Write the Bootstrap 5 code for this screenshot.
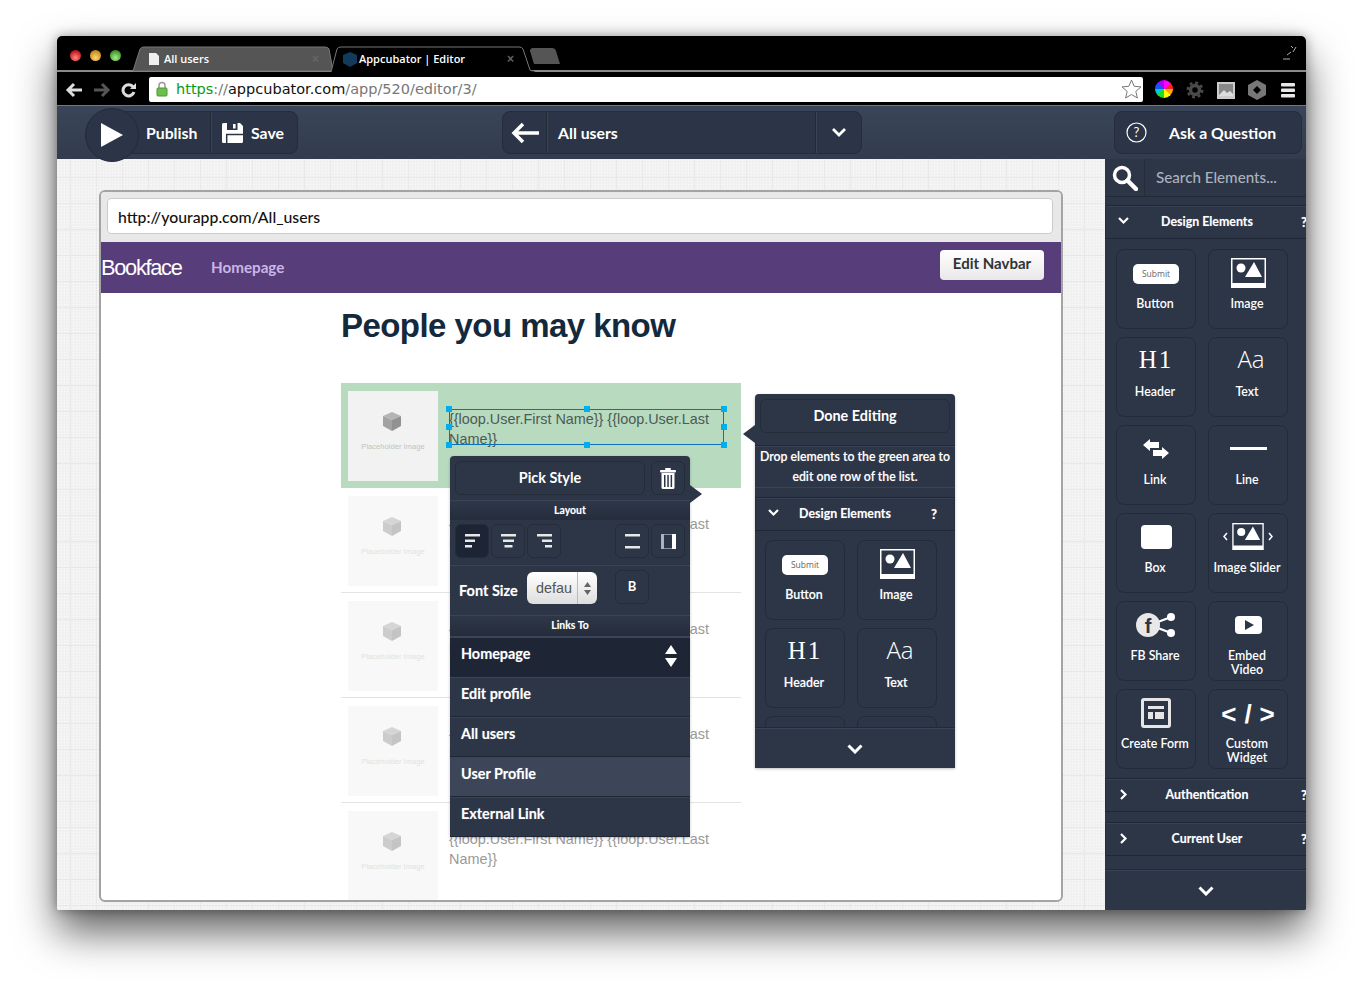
<!DOCTYPE html>
<html lang="en">
<head>
    <meta charset="UTF-8">
    <meta name="viewport" content="width=device-width, initial-scale=1.0">
    <title>Appcubator | Editor</title>

    <link href="https://cdn.jsdelivr.net/npm/bootstrap@5.3.0/dist/css/bootstrap.min.css" rel="stylesheet">
    <style>
        html, body { height: 989px; overflow: hidden; background: #fff; }
        body { padding: 36px 57px 0; font-family: Lato, "Liberation Sans", sans-serif; }

        .win { width: 1249px; height: 874px; border-radius: 5px 5px 2px 2px; overflow: hidden; box-shadow: 0 22px 42px rgba(0,0,0,.62), 0 0 12px rgba(0,0,0,.35); }

        /* browser chrome */
        .tabbar { height: 36px; background: #000; border-bottom: 2px solid #8a8a8a; position: relative; }
        .light { width: 11px; height: 11px; border-radius: 50%; position: absolute; top: 14px; }
        .light-r { left: 13px; background: radial-gradient(circle at 50% 70%, #ff8a80, #c8141c 70%); }
        .light-y { left: 33px; background: radial-gradient(circle at 50% 70%, #ffd77a, #c88a14 70%); }
        .light-g { left: 53px; background: radial-gradient(circle at 50% 70%, #a8ec8a, #3a9a28 70%); }
        .tabshape { position: absolute; left: 0; top: 0; }
        .tabtext { position: absolute; top: 15px; font: 600 11px "Open Sans", sans-serif; color: #fff; line-height: 16px; }
        .tabx { position: absolute; top: 15px; color: #666; font: 700 12px "Liberation Sans", sans-serif; line-height: 16px; }
        .winresize { position: absolute; right: 9px; top: 9px; }

        .urlrow { height: 34px; background: #000; border-bottom: 1px solid #777; padding-left: 8px; }
        .urlbox { width: 994px; height: 25px; background: #fff; border-radius: 2px; margin: 1px 12px 0 8px; padding: 0 1px 0 7px; font: 14.5px/25px "DejaVu Sans", sans-serif; color: #777; }
        .u-green { color: #0a9a14; }
        .u-black { color: #111; }
        .navico { width: 28px; }
        .extico { width: 31px; }
        .wheel { width: 18px; height: 18px; border-radius: 50%; background: conic-gradient(#f0f 0 45deg, #f22 45deg 90deg, #fa0 90deg 135deg, #ff0 135deg 180deg, #2d2 180deg 225deg, #0cc 225deg 270deg, #15f 270deg 315deg, #a0f 315deg); }

        /* editor toolbar */
        .apptop { height: 53px; background: linear-gradient(#394558, #323c4e); position: relative; z-index: 5; color: #fff; font-size: 15.8px; font-weight: 700; }
        .tgroup { height: 43px; background: #2b3547; border: 1px solid #252d3b; border-radius: 8px; position: absolute; top: 5px; }
        .tcell { height: 100%; border-right: 1px solid #222a38; box-shadow: 1px 0 0 #3a4456; }
        .tcell:last-child { border-right: 0; box-shadow: none; }
        .playdisc { position: absolute; left: 28px; top: 2px; width: 54px; height: 54px; border-radius: 50%; background: #2b3547; border: 1px solid #222a38; }

        /* main area */
        .workarea { height: 751px; position: relative; }
        .canvasbg { flex: 1; position: relative; background-color: #f1f1f1;
            background-image: linear-gradient(#e8e8e8 1px, transparent 1px), linear-gradient(90deg, #e9e9e9 1px, transparent 1px), radial-gradient(#fbfbfb .8px, transparent 1px);
            background-size: 26px 26px, 26px 26px, 3px 3px; background-position: 0 -8px, 13px 0, 0 0; }

        .frame { position: absolute; left: 42px; top: 31px; width: 964px; height: 712px; border: 2px solid #a4a4a4; border-radius: 6px; background: #fff; overflow: hidden; }
        .frametop { height: 50px; padding: 6px 8px 8px 6px; background: #e8e8e8; }
        .addr { height: 36px; background: #fff; border: 1px solid #ccc; border-radius: 4px; padding-left: 10px; font-size: 15.8px; font-weight: 500; line-height: 35px; color: #111; }
        .purple { height: 51px; background: #573e7b; padding-right: 17px; }
        .brand { color: #fff; font: 21.8px "Liberation Sans", sans-serif; letter-spacing: -1.3px; width: 110px; }
        .plink { color: #c9b6e4; font-size: 15.2px; font-weight: 700; }
        .editnav { width: 104px; height: 30px; margin-top: -6px; background: linear-gradient(#fff, #e8e8e8); color: #333; font-size: 15px; font-weight: 700; line-height: 1; padding: 0 0 2px; border-radius: 4px; border: 0; }
        .editnav:hover { background: #eee; color: #333; }

        .pagebody { margin-left: 240px; width: 400px; }
        .pagehead { height: 90px; margin: 0; padding-top: 13px; font: 700 33px/40px "Liberation Sans", sans-serif; letter-spacing: -.55px; color: #14293b; }
        .urow { height: 105px; padding: 8px 0 0 7px; border-bottom: 1px solid #e3e3e3; }
        .urow:first-child { background: #b8dbc0; border: 0; }
        .thumb { width: 90px; height: 90px; padding-top: 21px; background: #f8f8f8; flex: none; color: #e2e2e2; font: 7.6px/10px "Liberation Sans", sans-serif; }
        .urow:first-child .thumb { background: #f2f2f2; color: #c2c2c2; }
        .thumb svg { margin: 0 3px 11px 0; opacity: .5; }
        .urow:first-child .thumb svg { opacity: 1; }
        .rowtext { margin: 18px 0 0 11px; width: 275px; font: 14.4px/20px "Liberation Sans", sans-serif; color: #999; position: relative; height: 36px; }
        .urow:first-child .rowtext { color: #4b5a55; }
        .selbox { position: absolute; inset: 0; border: 1px solid #0a72b8; }
        .hnd { position: absolute; width: 6px; height: 6px; background: #00aeef; }

        /* popovers */
        .pop { position: absolute; background: #2d3647; color: #fff; font-weight: 700; box-shadow: 0 1px 3px rgba(0,0,0,.25); text-shadow: 0 0 1px rgba(255,255,255,.35); }
        .pop-style { left: 393px; top: 297px; width: 240px; height: 381px; border-radius: 4px 4px 0 0; }
        .pop-done { left: 698px; top: 235px; width: 200px; height: 374px; border-radius: 4px 4px 0 0; }
        .poparrow { position: absolute; width: 0; height: 0; border: 9px solid transparent; }
        .darkbtn { background: transparent; border: 1px solid #242c3a; border-radius: 6px; color: #fff; font-weight: 700; font-size: 14.4px; padding: 0; height: 34px; }
        .sbtn { width: 34px; flex: none; padding: 0; }
        .sbtn-on { background: #1d2535; }
        .layhead { height: 20px; background: linear-gradient(#2e3748, #252d3c); border-top: 1px solid #3a4456; font-size: 10.5px; line-height: 19px; text-align: center; }
        .fsz { font-size: 14.5px; line-height: 42px; }
        .sizesel { width: 70px; height: 32px; margin-top: 2px; background: linear-gradient(#fff, #dedede); border-radius: 6px; color: #555; font: 14.4px/32px "Liberation Sans", sans-serif; padding-left: 9px; text-shadow: none; }
        .sizesel i { margin-left: auto; width: 20px; height: 32px; border-left: 1px solid #bbb; }
        .plist .list-group-item { height: 40px; background: #2d3647; color: #fff; border: 0; border-bottom: 1px solid #1f2635; border-top: 1px solid #3a4456; border-radius: 0; padding: 6px 13px 5px 11px; font-size: 14.4px; line-height: 20px; font-weight: 700; }
        .plist .li-on { background: #1e2636; }
        .plist .li-hover { background: #3c4658; }

        .drophint { font-size: 12.3px; line-height: 20px; text-align: center; font-weight: 600; height: 40px; white-space: nowrap; }
        .rule { height: 2px; background: #3a4456; border-top: 1px solid #222a38; }
        .sechead { height: 34px; border: 1px solid #262e3d; border-bottom-color: #1f2635; border-top-color: #1f2635; box-shadow: inset 0 1px 0 #384254; font-size: 12.4px; position: relative; text-align: center; line-height: 32px; text-shadow: 0 0 1px rgba(255,255,255,.35); }
        .sechead svg { position: absolute; top: 11px; left: 12px; }
        .sechead .chev-r { top: 10px; left: 14px; }
        .qm { position: absolute; font-weight: 900; font-size: 13px; top: 0; }

        .tilegrid { display: grid; grid-template-columns: 80px 80px; gap: 8px 12px; }
        .tile { height: 80px; border: 1px solid #232b39; border-radius: 8px; text-align: center; font-size: 12.4px; line-height: 14px; font-weight: 600; }
        .tileico { height: 47px; }
        .tileico svg { margin-bottom: 2px; }
        .tilelabel { padding-right: 2px; }
        .submitchip { width: 46px; height: 20px; background: #fff; border-radius: 5px; color: #666; font: 8.5px/20px "Open Sans", sans-serif; text-shadow: none; }
        .h1glyph { font: 25px/1 "Liberation Serif", serif; letter-spacing: 2px; margin-bottom: 4px; color: #fff; text-shadow: none; }
        .aaglyph { font: 300 24px/1 "Open Sans", sans-serif; color: #fff; padding-left: 6px; margin-bottom: 5px; text-shadow: none; }
        .codeglyph { font: 700 26px/1 "Liberation Sans", sans-serif; letter-spacing: 8px; padding-left: 8px; white-space: pre; }

        .sidepane { width: 201px; background: #2d3647; position: relative; overflow: hidden; color: #fff; font-weight: 700; }
        .searchrow { height: 38px; border-bottom: 1px solid #222a38; }
        .searchicon { width: 40px; height: 37px; border-right: 1px solid #252d3b; }
        .searchtext { margin-left: 11px; font-size: 15.2px; font-weight: 500; color: #abb2bd; }
        .morebar { position: absolute; left: 0; right: 0; bottom: 0; height: 40px; background: #2d3647; border-top: 1px solid #3a4456; box-shadow: 0 -1px 0 #222a38; }
    </style>
</head>
<body>

<div class="win d-flex flex-column">

    <!-- Tab strip -->
    <div class="tabbar flex-none">
        <svg class="tabshape" width="520" height="36">
            <path d="M76 35 L83 13 Q84 11 87 11 L268 11 Q271 11 272 13 L276 35Z" fill="#555" stroke="#777"/>
            <path d="M274 36 L280 13 Q281 11 284 11 L462 11 Q465 11 466 13 L473 34 Q474 35 478 35 L478 38 L270 38Z" fill="#000" stroke="#777"/>
            <path d="M473 15 Q473 12 476 12 L495 12 Q498 12 499 15 L503 28 L477 28Z" fill="#555"/>
            <path d="M92 17h7l3 3v9H92z" fill="#eee"/>
            <path d="M286 19 l7 -3 l7 3 v8 l-7 4 l-7 -4z" fill="#123a5c"/>
        </svg>
        <span class="light light-r"></span><span class="light light-y"></span><span class="light light-g"></span>
        <span class="tabtext" style="left:107px">All users</span>
        <span class="tabx" style="left:255px">×</span>
        <span class="tabtext" style="left:302px">Appcubator | Editor</span>
        <span class="tabx" style="left:450px">×</span>
        <svg class="winresize" width="14" height="15" fill="none" stroke="#ddd" stroke-width=".8">
            <path d="M8 1l2 2M13 2l-3 5M0 14h7M4 10l4-3"/>
        </svg>
    </div>

    <!-- URL row -->
    <div class="urlrow d-flex align-items-center flex-none">
        <span class="navico"><svg width="18" height="16" fill="none" stroke="#ddd" stroke-width="3"><path d="M17 8H3M9 2L3 8l6 6"/></svg></span>
        <span class="navico"><svg width="18" height="16" fill="none" stroke="#555" stroke-width="3"><path d="M1 8h14M9 2l6 6-6 6"/></svg></span>
        <span class="navico" style="width:20px"><svg width="16" height="16" fill="none" stroke="#ddd" stroke-width="3"><path d="M13 10a5.6 5.6 0 1 1-.8-5"/><path d="M15 1v6H9z" fill="#ddd" stroke="none"/></svg></span>
        <div class="urlbox d-flex align-items-center">
            <svg class="me-2" width="12" height="16"><path d="M3 7V4.500a3 3 0 0 1 6 0V7" fill="none" stroke="#999" stroke-width="1.500"/><rect x="1" y="7" width="10" height="8" rx="1" fill="#6cc04a" stroke="#4a9a2c"/></svg>
            <span><span class="u-green">https</span>://<span class="u-black">appcubator.com</span>/app/520/editor/3/</span>
            <svg class="ms-auto" width="21" height="20" fill="#fff" stroke="#777"><path d="M10.500 1l2.700 6.300 6.800.6-5.200 4.500 1.600 6.600-5.900-3.500-5.900 3.500 1.600-6.600L1 7.900l6.800-.6z"/></svg>
        </div>
        <span class="extico"><span class="wheel d-block"></span></span>
        <span class="extico"><svg width="18" height="18" fill="none" stroke="#4a4a4a"><circle cx="9" cy="9" r="4.500" stroke-width="3.500"/><circle cx="9" cy="9" r="7.300" stroke-width="2.400" stroke-dasharray="2.900 2.830"/></svg></span>
        <span class="extico"><svg width="18" height="17"><rect width="18" height="17" fill="#ccc"/><rect x="2" y="2" width="14" height="12" fill="#888"/><path d="M2 13l5-5 3 3 3-2 3 3v2H2z" fill="#ddd"/></svg></span>
        <span class="extico" style="width:33px"><svg width="18" height="20"><path d="M9 0l9 5v10l-9 5-9-5V5z" fill="#777"/><path d="M9 6l4 4-4 4-4-4z" fill="#000"/></svg></span>
        <span><svg width="14" height="15" fill="#e8e8e8"><rect width="14" height="3.500" rx="1"/><rect y="5.500" width="14" height="3.500" rx="1"/><rect y="11" width="14" height="3.500" rx="1"/></svg></span>
    </div>

    <!-- Editor toolbar -->
    <div class="apptop flex-none">
        <div class="tgroup d-flex align-items-center" style="left:60px;width:181px">
            <div class="tcell d-flex align-items-center" style="width:93px;padding-left:28px">Publish</div>
            <div class="tcell d-flex align-items-center" style="padding-left:11px">
                <svg class="me-2" width="21" height="20" viewBox="0 0 21 20"><path d="M1.500 0H18l3 3v15.500a1.500 1.500 0 0 1-1.500 1.500h-18A1.500 1.500 0 0 1 0 18.500v-17A1.500 1.500 0 0 1 1.500 0z" fill="#fff"/><rect x="5" y="0" width="10.500" height="7" fill="#2b3547"/><rect x="11" y="1" width="2.600" height="4.500" fill="#fff"/><path d="M4.700 20v-8.500H21" fill="none" stroke="#2b3547" stroke-width="1.500"/></svg>
                Save
            </div>
        </div>
        <div class="playdisc d-flex align-items-center justify-content-center">
            <svg width="22" height="24"><path d="M0 0l22 12L0 24z" fill="#fff"/></svg>
        </div>
        <div class="tgroup d-flex align-items-center" style="left:445px;width:360px">
            <div class="tcell d-flex align-items-center justify-content-center flex-none" style="width:44px">
                <svg width="28" height="22" fill="none" stroke="#fff" stroke-width="3.500"><path d="M28 11H4M12 2l-9 9 9 9"/></svg>
            </div>
            <div class="tcell d-flex align-items-center flex-grow-1" style="padding-left:11px">All users</div>
            <div class="tcell d-flex align-items-center justify-content-center flex-none" style="width:45px;padding-left:1px">
                <svg width="14" height="9" fill="none" stroke="#fff" stroke-width="2.800"><path d="M1 1l6 6 6-6"/></svg>
            </div>
        </div>
        <div class="tgroup d-flex align-items-center" style="left:1057px;width:188px;padding-left:11px">
            <svg width="21" height="21" fill="none" stroke="#fff" stroke-width="1.200"><circle cx="10.500" cy="10.500" r="9.500"/><text x="10.500" y="15" text-anchor="middle" font-size="13" font-weight="400" fill="#fff" stroke="none" font-family="Lato, sans-serif">?</text></svg>
            <span style="margin-left:22px">Ask a Question</span>
        </div>
    </div>

    <div class="workarea d-flex">
        <div class="canvasbg">
            <div class="frame">
                <div class="frametop"><div class="addr">http://yourapp.com/All_users</div></div>
                <div class="purple d-flex align-items-center">
                    <span class="brand">Bookface</span>
                    <span class="plink">Homepage</span>
                    <button type="button" class="btn editnav ms-auto">Edit Navbar</button>
                </div>
                <div class="pagebody">
                    <h1 class="pagehead">People you may know</h1>
                    <div id="rows"></div>
                </div>
            </div>

            <!-- Pick style popover -->
            <div class="pop pop-style">
                <span class="poparrow" style="left:240px;top:29px;border-left-color:#2d3647;border-width:9px 0 9px 12px"></span>
                <div class="d-flex" style="gap:6px;padding:5px 5px 5px">
                    <button type="button" class="btn darkbtn flex-grow-1">Pick Style</button>
                    <button type="button" class="btn darkbtn sbtn d-flex align-items-center justify-content-center">
                        <svg width="16" height="21" fill="#fff"><rect x="5" y="0" width="6" height="2" rx="1"/><rect x="0" y="2" width="16" height="2.500" rx="1"/><path d="M1.500 5h13v14.500a1.500 1.500 0 0 1-1.500 1.500H3a1.500 1.500 0 0 1-1.500-1.500z"/><g fill="#2d3647"><rect x="4" y="7" width="1.500" height="12"/><rect x="7.300" y="7" width="1.500" height="12"/><rect x="10.600" y="7" width="1.500" height="12"/></g></svg>
                    </button>
                </div>
                <div class="layhead">Layout</div>
                <div class="d-flex" style="padding:4px 5px 7px;gap:2px;border-bottom:1px solid #3a4456">
                    <button type="button" class="btn darkbtn sbtn sbtn-on d-flex align-items-center justify-content-center"><svg width="15" height="14" fill="#e8e8e8"><rect y="0" width="15" height="2.500"/><rect y="5.500" width="10" height="2.500"/><rect y="11" width="7" height="2.500"/></svg></button>
                    <button type="button" class="btn darkbtn sbtn d-flex align-items-center justify-content-center"><svg width="15" height="14" fill="#e8e8e8"><rect y="0" width="15" height="2.500"/><rect x="2" y="5.500" width="11" height="2.500"/><rect x="3.500" y="11" width="8" height="2.500"/></svg></button>
                    <button type="button" class="btn darkbtn sbtn d-flex align-items-center justify-content-center"><svg width="15" height="14" fill="#e8e8e8"><rect y="0" width="15" height="2.500"/><rect x="5" y="5.500" width="10" height="2.500"/><rect x="8" y="11" width="7" height="2.500"/></svg></button>
                    <button type="button" class="btn darkbtn sbtn d-flex align-items-center justify-content-center ms-auto"><svg width="15" height="15" fill="#e8e8e8"><rect y="0" width="15" height="2.500"/><rect y="12" width="15" height="2.500"/></svg></button>
                    <button type="button" class="btn darkbtn sbtn d-flex align-items-center justify-content-center" style="margin-left:0"><svg width="15" height="15"><rect x=".5" y=".5" width="14" height="14" fill="none" stroke="#8c93a0"/><rect x="0" y="0" width="3" height="15" fill="#aeb2ba"/><rect x="11" y="0" width="4" height="15" fill="#fff"/></svg></button>
                </div>
                <div class="d-flex align-items-start" style="height:49px;padding:4px 0 0 9px">
                    <span class="fsz" style="width:68px">Font Size</span>
                    <span class="sizesel d-flex">defau<i class="d-flex align-items-center justify-content-center"><svg width="7" height="13" fill="#666"><path d="M3.500 0L7 5H0zM3.500 13L0 8h7z"/></svg></i></span>
                    <button type="button" class="btn darkbtn sbtn" style="margin-left:18px;font-size:13px">B</button>
                </div>
                <div class="layhead" style="border-bottom:1px solid #3a4456;height:22px">Links To</div>
                <ul class="list-group plist">
                    <li class="list-group-item li-on d-flex justify-content-between align-items-start">Homepage<svg width="12" height="22" fill="#fff" style="margin-top:1px"><path d="M6 0l6 9H0zM6 22L0 13h12z"/></svg></li>
                    <li class="list-group-item">Edit profile</li>
                    <li class="list-group-item">All users</li>
                    <li class="list-group-item li-hover">User Profile</li>
                    <li class="list-group-item">External Link</li>
                </ul>
            </div>

            <!-- Done editing popover -->
            <div class="pop pop-done overflow-visible">
                <span class="poparrow" style="left:-12px;top:31px;border-right-color:#2d3647;border-width:9px 12px 9px 0"></span>
                <div style="padding:5px 5px 12px">
                    <button type="button" class="btn darkbtn w-100">Done Editing</button>
                </div>
                <div class="rule"></div>
                <div class="drophint">Drop elements to the green area to<br>edit one row of the list.</div>
                <div style="height:10px;border-top:1px solid #3a4456;"></div>
                <div class="sechead"><svg width="11" height="8" fill="none" stroke="#fff" stroke-width="2.200"><path d="M1 1l4.500 4.500L10 1"/></svg><span class="d-block" style="margin-right:20px">Design Elements</span><span class="qm" style="right:17px">?</span></div>
                <div class="tilegrid" id="popTiles" style="padding:9px 0 0 10px;height:198px;overflow:hidden"></div>
                <div class="morebar d-flex align-items-center justify-content-center"><svg width="16" height="10" fill="none" stroke="#fff" stroke-width="3"><path d="M1.500 1.500l6.500 6.500 6.500-6.500"/></svg></div>
            </div>
        </div>

        <!-- Right side panel -->
        <div class="sidepane">
            <div class="searchrow d-flex align-items-center">
                <div class="searchicon d-flex align-items-center justify-content-center">
                    <svg width="26" height="26" fill="none" stroke="#fff"><circle cx="10" cy="10" r="7.500" stroke-width="3.500"/><path d="M15.500 15.500L24 24" stroke-width="4.500" stroke-linecap="round"/></svg>
                </div>
                <span class="searchtext">Search Elements...</span>
            </div>
            <div style="height:8px"></div>
            <div class="sechead" style="width:212px"><svg width="11" height="8" fill="none" stroke="#fff" stroke-width="2.200"><path d="M1 1l4.500 4.500L10 1"/></svg><span class="d-block" style="margin-right:8px">Design Elements</span><span class="qm" style="right:9px">?</span></div>
            <div class="tilegrid" id="sideTiles" style="padding:10px 0 0 11px"></div>
            <div style="height:9px"></div>
            <div class="sechead" style="width:212px"><svg class="chev-r" width="8" height="11" fill="none" stroke="#fff" stroke-width="2.200"><path d="M1 1l4.500 4.500L1 10"/></svg><span class="d-block" style="margin-right:8px">Authentication</span><span class="qm" style="right:9px">?</span></div>
            <div style="height:10px"></div>
            <div class="sechead" style="width:212px"><svg class="chev-r" width="8" height="11" fill="none" stroke="#fff" stroke-width="2.200"><path d="M1 1l4.500 4.500L1 10"/></svg><span class="d-block" style="margin-right:8px">Current User</span><span class="qm" style="right:9px">?</span></div>
            <div class="morebar d-flex align-items-center justify-content-center"><svg width="16" height="10" fill="none" stroke="#fff" stroke-width="3"><path d="M1.500 1.500l6.500 6.500 6.500-6.500"/></svg></div>
        </div>
    </div>
</div>

<script src="https://cdn.jsdelivr.net/npm/bootstrap@5.3.0/dist/js/bootstrap.bundle.min.js"></script>
<script>
    const rowText = '{{loop.User.First Name}} {{loop.User.Last Name}}';
    const cube = '<svg width="18" height="19" viewBox="0 0 18 19"><path d="M9 0l9 4-9 4-9-4z" fill="#b4b4b4"/><path d="M0 4l9 4v11l-9-5z" fill="#a2a2a2"/><path d="M18 4L9 8v11l9-5z" fill="#929292"/></svg>';

    let rowsHtml = '';
    for (let i = 0; i < 5; i++) {
        let handles = '';
        if (i === 0) {
            handles = '<span class="selbox"></span>';
            [[-3,-3],[135,-3],[272,-3],[-3,15],[272,15],[-3,33],[135,33],[272,33]].forEach(p => {
                handles += `<span class="hnd" style="left:${p[0]}px;top:${p[1]}px"></span>`;
            });
        }
        rowsHtml += `<div class="urow d-flex">
            <div class="thumb d-flex flex-column align-items-center">${cube}Placeholder Image</div>
            <div class="rowtext">${rowText}${handles}</div>
        </div>`;
    }
    document.getElementById('rows').innerHTML = rowsHtml;

    const imgIcon = (w, h) => `<svg width="${w}" height="${h}" viewBox="0 0 35 30"><rect width="35" height="30" fill="#fff"/><rect x="1.500" y="1.500" width="32" height="23.500" fill="#2d3647"/><circle cx="10" cy="10" r="4.500" fill="#fff"/><path d="M23 4l8 15H14z" fill="#fff"/></svg>`;
    const tiles = [
        ['Button', '<span class="submitchip d-block">Submit</span>'],
        ['Image', imgIcon(35, 30)],
        ['Header', '<span class="h1glyph">H1</span>'],
        ['Text', '<span class="aaglyph">Aa</span>'],
        ['Link', '<svg width="26" height="20" fill="#fff"><path d="M0 6l7-6v3h9v6H7v3zM26 14l-7 6v-3h-9v-6h9V8z"/></svg>'],
        ['Line', '<svg width="37" height="3"><rect width="37" height="3" fill="#fff"/></svg>'],
        ['Box', '<svg width="31" height="24"><rect width="31" height="24" rx="4" fill="#fff"/></svg>'],
        ['Image Slider', '<svg width="50" height="27" viewBox="0 0 50 27" fill="none" stroke="#fff" stroke-width="1.500"><path d="M4 10l-3 3.500 3 3.500M46 10l3 3.500-3 3.500"/><svg x="9" width="32" height="27" viewBox="0 0 35 30" stroke="none">' + imgIcon(35, 30).replace(/<svg[^>]*>|<\/svg>/g, '') + '</svg></svg>'],
        ['FB Share', '<svg width="40" height="26" viewBox="0 0 40 26"><path d="M14 13L35 5M14 13l21 8" stroke="#fff" stroke-width="2.200"/><circle cx="12" cy="13" r="12" fill="#e8e8e8"/><circle cx="35" cy="5" r="4" fill="#fff"/><circle cx="35" cy="21" r="4" fill="#fff"/><text x="12" y="21" text-anchor="middle" font-size="20" font-weight="700" fill="#2d3647" font-family="Liberation Sans, sans-serif">f</text></svg>'],
        ['Embed<br>Video', '<svg width="27" height="18"><rect width="27" height="18" rx="4" fill="#fff"/><path d="M10 4l9 5-9 5z" fill="#2d3647"/></svg>'],
        ['Create Form', '<svg width="30" height="30"><rect width="30" height="30" rx="3" fill="#e6e6e6"/><rect x="3" y="3" width="24" height="24" fill="#2d3647"/><rect x="7" y="8" width="16" height="3" fill="#e6e6e6"/><rect x="7" y="14" width="5" height="7" fill="#e6e6e6"/><rect x="14" y="14" width="9" height="7" fill="#e6e6e6"/></svg>'],
        ['Custom<br>Widget', '<span class="codeglyph">&lt;/&gt;</span>']
    ];
    const tileHtml = t => `<div class="tile"><div class="tileico d-flex align-items-center justify-content-center">${t[1]}</div><div class="tilelabel">${t[0]}</div></div>`;
    document.getElementById('sideTiles').innerHTML = tiles.map(tileHtml).join('');
    // the popup list is cut by its bottom bar, only the tops of the third row show
    document.getElementById('popTiles').innerHTML = tiles.slice(0, 4).map(tileHtml).join('') + '<div class="tile"></div><div class="tile"></div>';
</script>

</body>
</html>
